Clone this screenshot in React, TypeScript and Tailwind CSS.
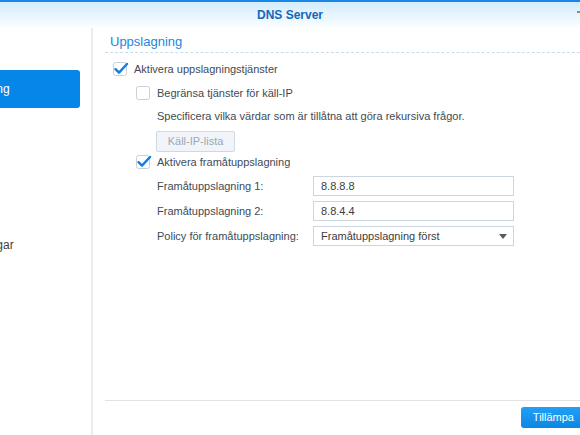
import React from "react";

const FONT = { fontFamily: '"Liberation Sans", Arial, sans-serif' };

const sidebarItems = ["Zoner", "Uppslagning", "Logg", "Nyckel", "Vyer", "Inställningar"];

function CheckBox({ checked }: { checked: boolean }) {
  return (
    <svg className="w-[16px] h-[16px] shrink-0 overflow-visible" viewBox="0 0 16 16">
      <rect x="1.5" y="1.5" width="13" height="13" rx="2" fill="#fff" stroke="#c8d0d8" strokeWidth="1" />
      {checked && (
        <path d="M3.5 8.2 L7 11.6 L15 3" fill="none" stroke="#0d7fe6" strokeWidth="2.4" strokeLinecap="round" strokeLinejoin="round" />
      )}
    </svg>
  );
}

function FieldRow({ label, children }: { label: string; children: React.ReactNode }) {
  return (
    <div className="flex items-center h-[20px]">
      <span className="w-[156px] text-[11px] text-[#414b55]">{label}</span>
      <div className="w-[201px] h-[20px] border border-[#cbd6e2] bg-white flex items-center pl-[7px] pr-[6px] text-[11px] text-[#3d3d3d]">
        {children}
      </div>
    </div>
  );
}

export default function App() {
  return (
    <div className="w-[580px] h-[435px] overflow-hidden bg-white flex flex-col relative" style={FONT}>
      {/* window title bar */}
      <div className="h-[28px] shrink-0 border-t-2 border-[#1a86e6] bg-gradient-to-b from-[#d2ecfc] to-[#fbfeff] flex items-center justify-center relative">
        <span className="text-[12px] font-bold text-[#1467b9]">DNS Server</span>
        <span className="absolute right-0 top-[9px] w-[3px] h-[2px] bg-[#8a8a8a]" />
      </div>

      <div className="flex flex-1 min-h-0">
        {/* sidebar, cut off at the left edge */}
        <div className="w-[93px] shrink-0 border-r-2 border-[#ececec] overflow-hidden pt-[3px]">
          <div className="-ml-[57px] flex flex-col gap-[1px]">
            {sidebarItems.map((item) => (
              <div
                key={item}
                className={`w-[137px] h-[38px] flex items-center text-[12px] whitespace-nowrap rounded-r-[3px] ${
                  item === "Uppslagning" ? "bg-[#0786ea] text-white" : "text-[#3e3e3e]"
                } ${item === "Inställningar" ? "pl-[6px]" : ""}`}
              >
                {item}
              </div>
            ))}
          </div>
        </div>

        {/* main panel */}
        <div className="flex-1 flex flex-col pl-[12px] min-w-0">
          <div className="pt-[6px] pb-[2px] pl-[5px] border-b border-dashed border-[#c9dcec]">
            <h2 className="text-[13px] leading-[16px] text-[#1b86e3]">Uppslagning</h2>
          </div>

          <div className="flex-1 flex flex-col pl-[7px] text-[11px] text-[#414b55]">
            <label className="mt-[8px] h-[16px] flex items-center gap-[6px]">
              <CheckBox checked />
              <span>Aktivera uppslagningstjänster</span>
            </label>

            <div className="pl-[23px] flex flex-col">
              <label className="mt-[8px] h-[16px] flex items-center gap-[6px]">
                <CheckBox checked={false} />
                <span>Begränsa tjänster för käll-IP</span>
              </label>

              <div className="pl-[22px] flex flex-col">
                <p className="mt-[7px] h-[16px] leading-[16px]">
                  Specificera vilka värdar som är tillåtna att göra rekursiva frågor.
                </p>
                <button
                  disabled
                  className="mt-[7px] w-[79px] h-[21px] -ml-[1px] rounded-[2px] border border-[#cfd9e4] bg-[#f1f5f9] text-[11px] text-[#9aa8b6]"
                >
                  Käll-IP-lista
                </button>
              </div>

              <label className="mt-[2px] h-[16px] flex items-center gap-[6px]">
                <CheckBox checked />
                <span>Aktivera framåtuppslagning</span>
              </label>

              <div className="pl-[22px] mt-[6px] flex flex-col gap-[5px]">
                <FieldRow label="Framåtuppslagning 1:">8.8.8.8</FieldRow>
                <FieldRow label="Framåtuppslagning 2:">8.8.4.4</FieldRow>
                <FieldRow label="Policy för framåtuppslagning:">
                  <span className="flex-1">Framåtuppslagning först</span>
                  <svg className="w-[8px] h-[5px]" viewBox="0 0 8 5">
                    <path d="M0 0 H8 L4 5 Z" fill="#555b61" />
                  </svg>
                </FieldRow>
              </div>
            </div>
          </div>

          {/* footer */}
          <div className="h-[35px] shrink-0 border-t border-[#e3e3e3] flex justify-end items-start">
            <button className="mt-[6px] -mr-[6px] h-[21px] px-[12px] rounded-[3px] bg-gradient-to-b from-[#21a0f5] to-[#0a86e4] text-[11px] text-white">
              Tillämpa
            </button>
          </div>
        </div>
      </div>
    </div>
  );
}
